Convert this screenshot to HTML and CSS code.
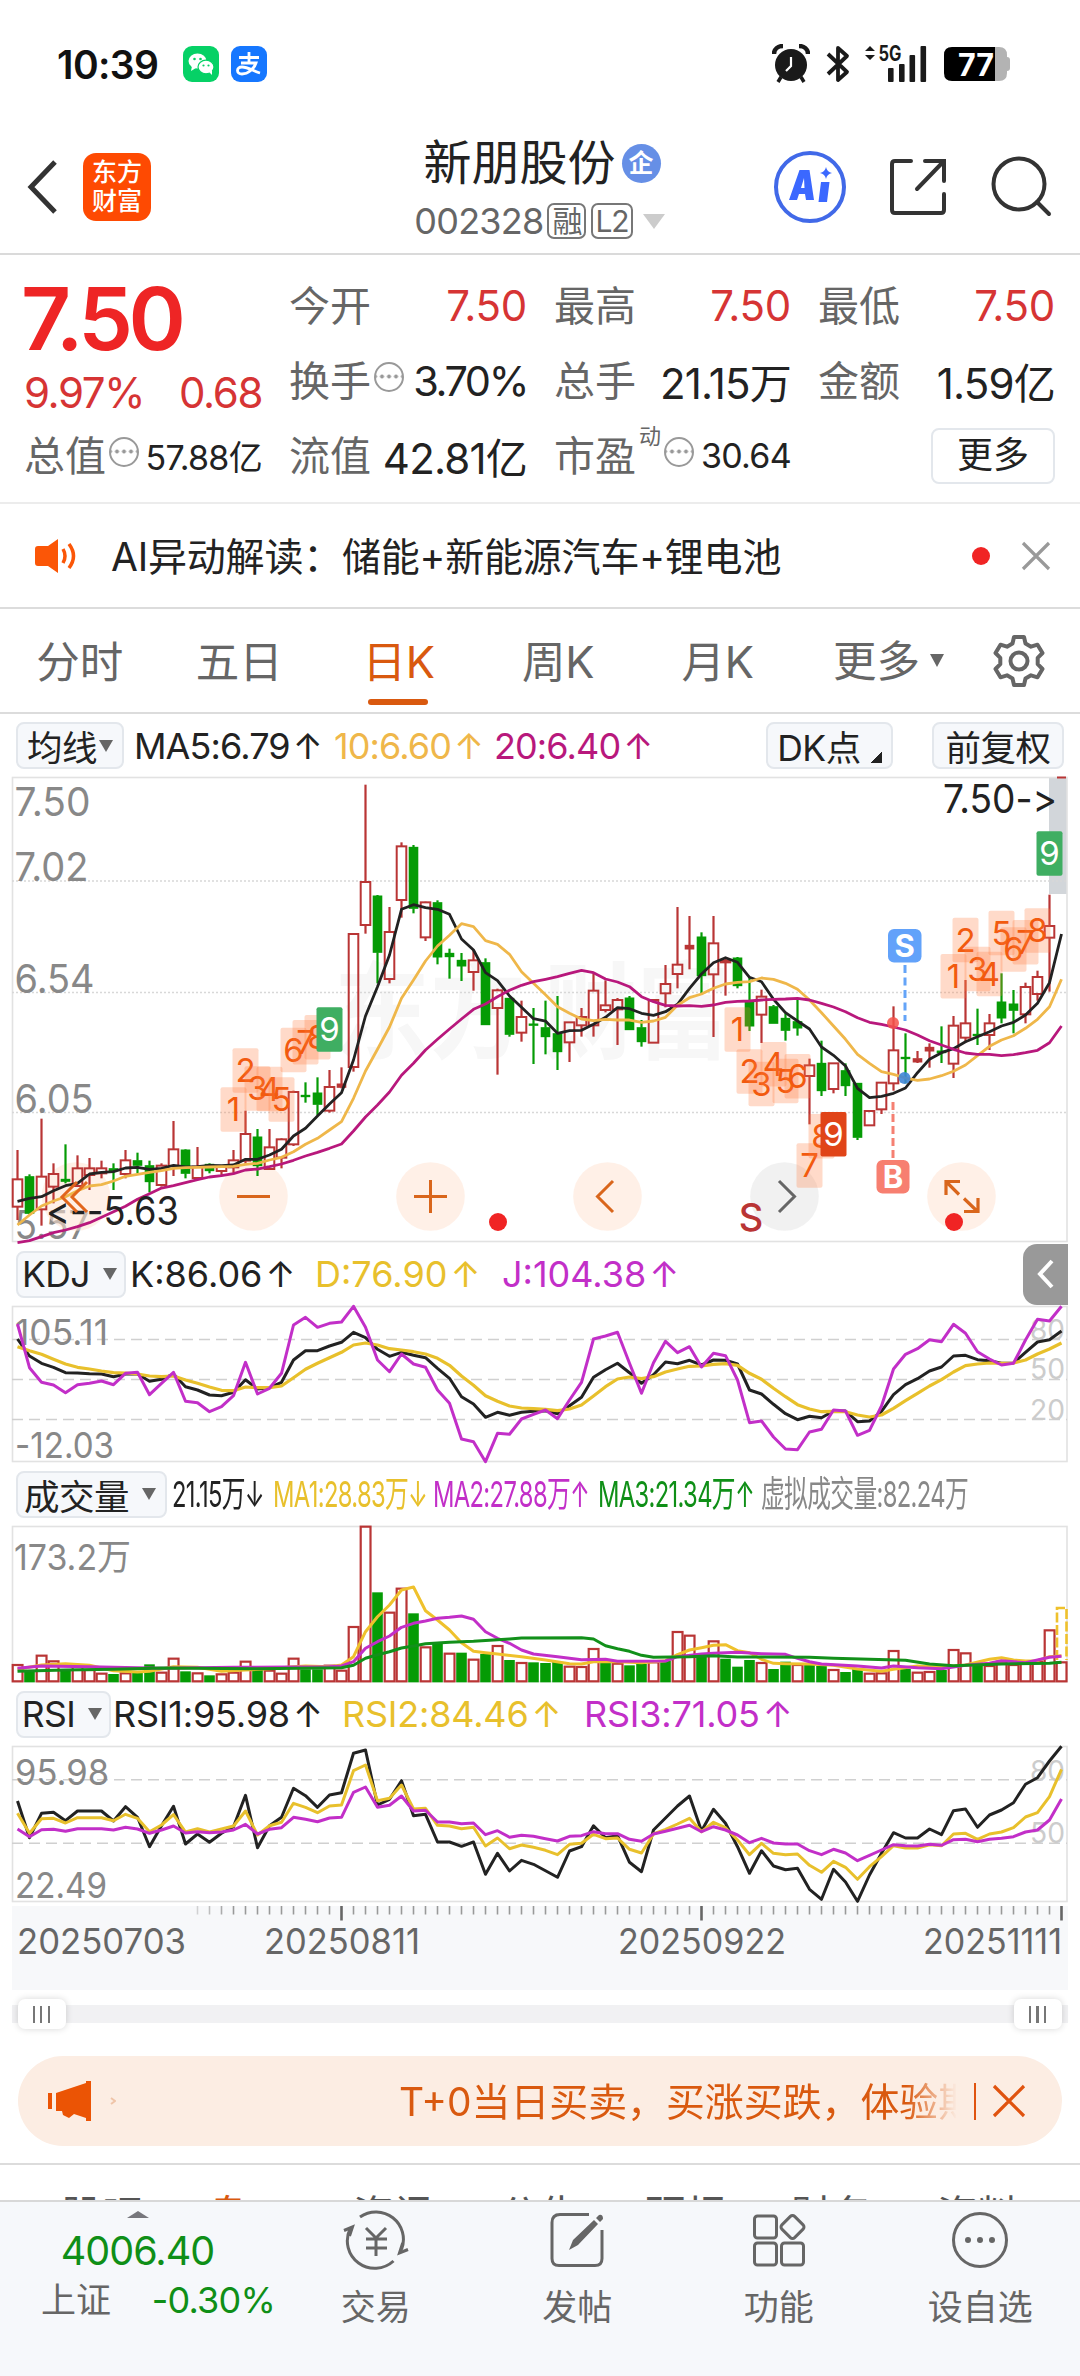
FILE: index.html
```html
<!DOCTYPE html>
<html lang="zh-CN">
<head>
<meta charset="utf-8">
<title>新朋股份 002328</title>
<link rel="stylesheet" href="styles.css">
</head>
<body>
<div class="status">
  <span class="clock">10:39</span>
  <svg class="app" width="36" height="36" viewBox="0 0 36 36"><rect width="36" height="36" rx="9" fill="#06d166"/><ellipse cx="14.500" cy="15" rx="9" ry="7.600" fill="#fff"/><path d="M9 20l-1 5 5-3z" fill="#fff"/><ellipse cx="23" cy="21" rx="8" ry="6.800" fill="#fff" stroke="#06d166" stroke-width="1.200"/><path d="M26 26l3 3 0-5z" fill="#fff"/><g fill="#06d166"><circle cx="11.500" cy="13" r="1.300"/><circle cx="17.500" cy="13" r="1.300"/><circle cx="20.500" cy="19.500" r="1.100"/><circle cx="25.500" cy="19.500" r="1.100"/></g></svg>
  <svg class="app" width="36" height="36" viewBox="0 0 36 36"><rect width="36" height="36" rx="9" fill="#1677ff"/><path d="M8 11.500h20M18 6v11M10 17h15c-2 6-8 11-14 11-6 0-6-7 0-7 6 0 11 4 18 6" fill="none" stroke="#fff" stroke-width="2.800"/></svg>
  <span class="grow"></span>
  <svg width="38" height="40" viewBox="0 0 38 40"><circle cx="19" cy="21" r="16" fill="#1a1a1a"/><path d="M2 10C2 5 6 2 11 2M36 10C36 5 32 2 27 2" stroke="#1a1a1a" stroke-width="4.500" fill="none"/><path d="M9 33l-3 5M29 33l3 5" stroke="#1a1a1a" stroke-width="3.500"/><path d="M19 13v9l-5 5" stroke="#fff" stroke-width="2.200" fill="none"/></svg>
  <svg class="bt" width="24" height="38" viewBox="0 0 24 38"><path d="M2 9l19 18-9 8V3l9 8L2 29" fill="none" stroke="#1a1a1a" stroke-width="3.800" stroke-linejoin="round"/></svg>
  <svg class="sig" width="63" height="38" viewBox="0 0 63 38"><path d="M0 6l5-5 5 5zM0 10l5 5 5-5z" fill="#1a1a1a"/><text x="13.500" y="16" font-size="21" font-weight="700" textLength="23" lengthAdjust="spacingAndGlyphs" fill="#1a1a1a">5G</text><g fill="#1a1a1a"><rect x="23" y="23" width="5.600" height="14" rx="1"/><rect x="34" y="19" width="5.600" height="18" rx="1"/><rect x="44.500" y="10" width="5.600" height="27" rx="1"/><rect x="55.500" y="1" width="5.600" height="36" rx="1"/></g></svg>
  <svg width="67" height="34" viewBox="0 0 67 34"><path d="M51 0h4q8 0 8 8v2q3 0 3 3v8q0 3-3 3v2q0 8-8 8h-4z" fill="#b3b3b3"/><path d="M8 0h43v34H8q-8 0-8-8V8q0-8 8-8z" fill="#000"/><text x="14" y="28.500" font-size="31" font-weight="700" textLength="36" lengthAdjust="spacingAndGlyphs" fill="#fff">77</text></svg>
</div>

<header class="head">
  <div class="head-left">
    <svg width="32" height="56" viewBox="0 0 32 56"><path d="M28 3L4 28l24 25" fill="none" stroke="#333" stroke-width="5"/></svg>
    <div class="logo"><span>东方</span><span>财富</span></div>
  </div>
  <div class="head-mid">
    <div class="name">新朋股份<span class="corp">企</span></div>
    <div class="code"><span class="num">002328</span><span class="tag">融</span><span class="tag">L2</span><i class="down"></i></div>
  </div>
  <div class="head-right">
    <svg width="74" height="74" viewBox="0 0 74 74"><circle cx="37" cy="37" r="34" fill="none" stroke="#4169e8" stroke-width="4"/><path d="M16 50L26.500 20h10L41 50h-8l-1-6h-6l-2 6zM28 38h3.500L31 28zM48 32h8.500L54 52h-8.500z" fill="#3b68ff"/><path d="M53 17q1 5 6 6-5 1-6 6-1-5-6-6 5-1 6-6z" fill="#3b68ff"/></svg>
    <svg class="share" width="60" height="60" viewBox="0 0 60 60"><path d="M23 4H7Q4 4 4 7v46q0 3 3 3h46q3 0 3-3V37M37 4h19v20M56 4L29 32" fill="none" stroke="#333" stroke-width="4" stroke-linecap="round"/></svg>
    <svg width="62" height="62" viewBox="0 0 62 62"><circle cx="29" cy="28" r="25.500" fill="none" stroke="#333" stroke-width="4"/><path d="M47 46l12 12" stroke="#333" stroke-width="4" stroke-linecap="round"/></svg>
  </div>
</header>

<section class="quote">
  <div class="qcol">
    <div class="price">7.50</div>
    <div class="chg"><span>9.97%</span><span>0.68</span></div>
    <div class="cell"><label>总值</label><i class="more-dot"></i><b class="small">57.88亿</b></div>
  </div>
  <div class="qcol">
    <div class="cell"><label>今开</label><b class="up">7.50</b></div>
    <div class="cell"><label>换手</label><i class="more-dot"></i><b class="pct">3.70%</b></div>
    <div class="cell"><label>流值</label><b>42.81亿</b></div>
  </div>
  <div class="qcol">
    <div class="cell"><label>最高</label><b class="up">7.50</b></div>
    <div class="cell"><label>总手</label><b>21.15万</b></div>
    <div class="cell"><label>市盈</label><sup>动</sup><i class="more-dot"></i><b class="small">30.64</b></div>
  </div>
  <div class="qcol">
    <div class="cell"><label>最低</label><b class="up">7.50</b></div>
    <div class="cell"><label>金额</label><b>1.59亿</b></div>
    <div class="cell end"><span class="more">更多</span></div>
  </div>
</section>

<section class="notice">
  <svg width="44" height="36" viewBox="0 0 44 36"><path d="M4 8h10L24 1v34l-10-7H4q-3 0-3-3V11q0-3 3-3z" fill="#fb5607"/><path d="M29 11q4 7 0 14M35 6q9 12 0 24" fill="none" stroke="#fb5607" stroke-width="3.500"/></svg>
  <p>AI异动解读：储能+新能源汽车+锂电池</p>
  <span class="dot"></span>
  <svg width="30" height="30" viewBox="0 0 30 30"><path d="M2 2l26 26M28 2L2 28" stroke="#999" stroke-width="3.200"/></svg>
</section>

<nav class="periods">
  <span>分时</span><span>五日</span><span class="on">日K</span><span>周K</span><span>月K</span><span class="drop">更多<i></i></span>
  <svg width="52" height="52" viewBox="0 0 52 52"><path d="M21 2h10l1.500 6.500 5.500 3.200 6.500-2L49.500 18l-4.800 4.800v6.400L49.500 34l-5 8.300-6.500-2-5.500 3.200L31 50H21l-1.500-6.500-5.500-3.200-6.500 2L2.500 34l4.800-4.800v-6.400L2.500 18l5-8.300 6.500 2 5.500-3.200z" fill="none" stroke="#666" stroke-width="4" stroke-linejoin="round"/><circle cx="26" cy="26" r="8.500" fill="none" stroke="#666" stroke-width="4"/></svg>
</nav>

<div class="legend ma">
  <span class="pick">均线<i></i></span><span>MA5:6.79<em></em>↑</span><span class="c-amber">10:6.60<em></em>↑</span><span class="c-berry">20:6.40<em></em>↑</span>
  <span class="pick">DK点<i class="corner"></i></span><span class="pick fq">前复权</span>
</div>
<svg class="panel" id="main" viewBox="12 777 1056 465" height="465"></svg>

<div class="legend kdj">
  <span class="pick">KDJ<i></i></span><span>K:86.06<em></em>↑</span><span class="c-gold">D:76.90<em></em>↑</span><span class="c-violet">J:104.38<em></em>↑</span>
  <span class="fold"><svg width="20" height="30" viewBox="0 0 20 30"><path d="M16 2L4 15l12 13" fill="none" stroke="#fff" stroke-width="4"/></svg></span>
</div>
<svg class="panel" id="kdj" viewBox="12 1306 1056 156" height="156"></svg>

<div class="legend vol">
  <span class="pick">成交量<i></i></span><span class="thin">21.15万↓</span><span class="thin c-gold">MA1:28.83万↓</span><span class="thin c-violet">MA2:27.88万↑</span><span class="thin c-green">MA3:21.34万↑</span><span class="thin c-grey">虚拟成交量:82.24万</span>
</div>
<svg class="panel" id="vol" viewBox="12 1526 1056 156" height="156"></svg>

<div class="legend rsi">
  <span class="pick">RSI<i></i></span><span>RSI1:95.98<em></em>↑</span><span class="c-gold">RSI2:84.46<em></em>↑</span><span class="c-violet">RSI3:71.05<em></em>↑</span>
</div>
<svg class="panel" id="rsi" viewBox="12 1746 1056 156" height="156"></svg>
<svg class="panel axis" id="axis" viewBox="12 1906 1056 84" height="84"></svg>

<div class="slider"><span class="grip"></span><span class="rail"></span><span class="grip"></span></div>

<div class="promo">
  <svg width="46" height="40" viewBox="0 0 46 40"><path d="M0 12h4v16H0zM8 12L38 2V0h5v40h-5v-3l-12-4-5 4-6-3-1-4H8z" fill="#eb5405"/></svg>
  <svg class="wee" width="6" height="8" viewBox="0 0 6 8"><path d="M1 1l4 3-4 3" fill="none" stroke="#efc4a8" stroke-width="2"/></svg>
  <p>T+0当日买卖，买涨买跌，体验期</p>
  <span class="bar"></span>
  <svg width="34" height="36" viewBox="0 0 34 36"><path d="M2 3l30 30M32 3L2 33" stroke="#e0530f" stroke-width="3.200"/></svg>
</div>

<nav class="sections"><span>股吧</span><span class="on">盘口</span><span>资讯</span><span>公告</span><span>研报</span><span>财务</span><span>资料</span></nav>

<footer class="dock">
  <div class="index"><i class="tri"></i><strong>4006.40</strong><div><span>上证</span><b>-0.30%</b></div></div>
  <div class="act"><svg width="66" height="60" viewBox="0 0 66 60"><g fill="none" stroke="#666" stroke-width="3"><path d="M17 7a27.500 27.500 0 0 1 41.500 32.500M50.500 51a27.500 27.500 0 0 1-43.500-32"/><path d="M1 20.500l8.500-3.500L6.500 26M65 39.500l-8.500 3.500 3.200-10"/><path d="M23 18l10 10 10-10M33 28v18M23 29h21M23 38h21"/></g></svg><span>交易</span></div>
  <div class="act"><svg width="60" height="60" viewBox="0 0 60 60"><path d="M42 4.500H13Q5 4.500 5 12.500v36q0 7 7 7h36q7 0 7-7V20" fill="none" stroke="#666" stroke-width="3"/><path d="M22 40l4-10L47 10l4 4-20 21zM49 8l3-3q4-1 4 4l-3 3z" fill="#666"/></svg><span>发帖</span></div>
  <div class="act"><svg width="60" height="60" viewBox="0 0 60 60"><g fill="none" stroke="#666" stroke-width="3"><rect x="5.500" y="6" width="22" height="22" rx="3"/><rect x="5.500" y="33" width="22" height="22" rx="3"/><rect x="32.500" y="33" width="22" height="22" rx="3"/><rect x="34.500" y="8" width="18" height="18" rx="3" transform="rotate(45 43.500 17)"/></g></svg><span>功能</span></div>
  <div class="act"><svg width="60" height="60" viewBox="0 0 60 60"><circle cx="30" cy="30" r="26.500" fill="none" stroke="#666" stroke-width="3"/><g fill="#666"><circle cx="18" cy="30" r="3"/><circle cx="30" cy="30" r="3"/><circle cx="42" cy="30" r="3"/></g></svg><span>设自选</span></div>
</footer>
<script src="charts.js"></script>
</body>
</html>
```
FILE: styles.css
```css
* { box-sizing: border-box; }
body {
  margin: 0;
  width: 1080px;
  height: 2376px;
  overflow: hidden;
  background: #fff;
  color: #222;
  font-family: Inter, "Noto Sans CJK SC", sans-serif;
  display: flex;
  flex-direction: column;
}
body > * { flex: none; }
svg { display: block; flex: none; }
i, em { font-style: normal; }
p { margin: 0; }
.grow { flex: 1; }

.status { height: 120px; display: flex; align-items: center; padding: 8px 69px 0 57px; color: #111; }
.clock { width: 126px; font-size: 39px; font-weight: 600; letter-spacing: -.6px; }
.app { margin-right: 12px; }
.bt { margin-left: 16px; }
.sig { margin: 0 16px 0 15px; }

.head { height: 135px; border-bottom: 2px solid #dadada; display: grid; grid-template-columns: 1fr auto 1fr; padding: 0 28px 0 27px; }
.head-left { display: flex; align-items: center; }
.logo { margin-left: 24px; width: 68px; height: 68px; border-radius: 13px; background: #fe4a02; color: #fff; font-size: 25px; font-weight: 500; line-height: 29px; display: flex; flex-direction: column; align-items: center; justify-content: center; }
.head-mid { display: flex; flex-direction: column; align-items: center; padding-top: 13px; }
.name { display: flex; align-items: center; font-size: 48px; line-height: 60px; height: 60px; padding-left: 5px; }
.corp { width: 39px; height: 39px; margin-left: 6px; border-radius: 50%; background: #668fe6; color: #fff; font-size: 25px; font-weight: 700; line-height: 38px; text-align: center; }
.code { display: flex; align-items: center; height: 56px; color: #666; font-size: 36px; }
.num { letter-spacing: -.8px; margin-right: 4px; }
.tag { height: 36px; min-width: 39px; border: 2px solid #777; border-radius: 7px; margin-right: 5px; font-size: 30px; line-height: 32px; text-align: center; padding: 0 2px; letter-spacing: -1px; }
.down { border: 11px solid transparent; border-top: 15px solid #ccc; border-bottom: 0; margin-left: 5px; }
.head-right { display: flex; align-items: center; justify-content: flex-end; }
.share { margin: 0 42px 0 41px; }

.quote { height: 249px; border-bottom: 2px solid #ececec; display: grid; grid-template-columns: 238px 238px 237px 237px; column-gap: 27px; padding: 13px 0 0 24px; }
.qcol { display: flex; flex-direction: column; }
.cell { height: 75px; display: flex; align-items: center; }
.cell label { color: #666; font-size: 41px; line-height: 60px; }
.cell b { margin-left: auto; font-weight: 400; font-size: 42px; letter-spacing: -.8px; white-space: nowrap; }
.cell b.small { font-size: 34px; letter-spacing: -.7px; }
.cell b.pct { letter-spacing: -2.4px; font-size: 41.5px; }
.cell b.up { color: #d63434; letter-spacing: -.3px; }
.chg { color: #d63434; }
.cell sup { align-self: flex-start; font-size: 22px; line-height: 30px; color: #666; margin: 3px 0 0 3px; }
.end { justify-content: flex-end; }
.price { height: 99px; color: #ee2525; font-size: 87px; font-weight: 600; line-height: 102px; letter-spacing: -4.5px; margin-left: -3px; }
.chg { height: 51px; display: flex; justify-content: space-between; align-items: center; font-size: 42px; letter-spacing: -1.400px; }
.more-dot { width: 30px; height: 30px; margin: -8px 0 0 3px; border: 2.500px solid #999; border-radius: 50%; background: radial-gradient(circle, #999 1.800px, transparent 2.300px) 50% 50% / 7px 25px repeat-x; }
.more { width: 124px; height: 56px; border: 2px solid #e3e7ec; border-radius: 8px; font-size: 36px; line-height: 50px; text-align: center; }

.notice { height: 105px; display: flex; align-items: center; padding: 0 29px 0 34px; border-bottom: 2px solid #dcdcdc; }
.notice p { flex: 1; margin: -4px 0 0 33px; font-size: 39px; letter-spacing: -.200px; color: #222; }
.dot { width: 18px; height: 18px; border-radius: 50%; background: #f02424; margin-right: 31px; }

.periods { height: 105px; display: grid; grid-template-columns: repeat(5, 159.500px) 182px 84px; align-items: center; border-bottom: 2px solid #dcdcdc; color: #666; font-size: 43.5px; }
.periods span { height: 103px; line-height: 106px; text-align: center; position: relative; }
.periods .on { color: #d9590f; }
.periods .on::after { content: ""; position: absolute; left: 49px; bottom: 7px; width: 60px; height: 6px; border-radius: 3px; background: #d9590f; }
.periods .drop { display: flex; align-items: center; justify-content: center; }
.drop i { border: 7.500px solid transparent; border-top: 13px solid #666; border-bottom: 0; margin-left: 10px; }
.periods svg { margin-left: 13px; }

.legend { height: 64px; display: grid; align-items: center; font-size: 36px; letter-spacing: 0; white-space: nowrap; }
.legend span:not(.pick):not(.fold) { line-height: 60px; }
.legend em { display: inline-block; width: 3px; }
.pick { height: 47px; border: 2px solid #e3e7ec; border-radius: 8px; background: #f6f8fb; display: flex; align-items: center; justify-content: center; color: #222; font-size: 35.5px; letter-spacing: -.500px; }
.pick i { border: 7px solid transparent; border-top: 12px solid #666; border-bottom: 0; margin-left: 2px; }
.pick i.corner { border: 0; width: 11px; height: 11px; margin: 24px 0 0 10px; background: linear-gradient(135deg, transparent 50%, #222 50%); }
.ma { height: 63px; grid-template-columns: 108px 186px 148px 260px 127px 159px; padding-left: 16px; column-gap: 12px; letter-spacing: -.9px; }
.ma .fq { margin-left: 27px; width: 132px; }
.ma > span:nth-child(2) { margin-left: -2px; }
.kdj { grid-template-columns: 110px 181px 183px 1fr 45px; padding: 0 12px 0 16px; column-gap: 4px; }
.vol { grid-template-columns: 151px 96px 155px 160px 158px 1fr; padding-left: 16px; column-gap: 5px; letter-spacing: -1px; }
.rsi { grid-template-columns: 95px 227px 240px 1fr; padding-left: 16px; column-gap: 2px; letter-spacing: -.2px; }
.kdj .pick, .rsi .pick, .vol .pick { padding-right: 3px; }
.kdj .pick i, .rsi .pick i, .vol .pick i { margin-left: 13px; }
.thin { transform: scaleX(.66); transform-origin: 0 50%; width: 0; }
.c-amber { color: #efb74a; }
.c-berry { color: #b8187c; }
.c-gold { color: #e8c02c; }
.c-violet { color: #c22fc8; }
.c-green { color: #0f8f17; }
.c-grey { color: #888; }
.fold { height: 61px; border-radius: 14px 0 0 14px; background: #999; display: flex; align-items: center; justify-content: center; }

.panel { width: 1056px; margin: 0 12px; overflow: visible; }
.axis { margin-top: 4px; background: #f7f8fa; }

.slider { height: 66px; margin: 0 12px; display: flex; align-items: center; padding: 0 6px 18px; background: linear-gradient(#f1f1f3, #f1f1f3) 0 15px / 100% 18px no-repeat; }
.rail { flex: 1; }
.grip { width: 48px; height: 30px; border-radius: 7px; background: repeating-linear-gradient(90deg, #777 0 2px, transparent 2px 7.500px) 15px 7px / 18px 17px no-repeat #fff; box-shadow: 0 0 7px rgba(0, 0, 0, .16); }

.promo { height: 90px; margin: 0 18px 17px; padding: 0 36px 0 30px; border-radius: 45px; background: #fcede3; display: flex; align-items: center; }
.wee { margin-left: 16px; }
.promo p { margin: -5px 0 0 283px; width: 557px; overflow: hidden; white-space: nowrap; font-size: 38.900px; color: #d9590f; -webkit-mask-image: linear-gradient(90deg, #000 507px, transparent 558px); mask-image: linear-gradient(90deg, #000 507px, transparent 558px); }
.bar { width: 2px; height: 37px; background: #e0530f; margin: 0 16px 0 18px; }

.sections { height: 37px; border-top: 2px solid #dcdcdc; overflow: hidden; display: grid; grid-template-columns: repeat(7, 146px); padding: 27px 0 0 29px; font-size: 41px; line-height: 46px; color: #555; text-align: center; }
.sections .on { color: #d9590f; }

.dock { height: 176px; border-top: 2px solid #d8d8d8; background: #f6f8fb; display: grid; grid-template-columns: 275px repeat(4, 201.500px); color: #666; }
.index { display: flex; flex-direction: column; align-items: center; }
.tri { border: 11px solid transparent; border-bottom: 7px solid #77777c; border-top: 0; margin-top: 9px; }
.index strong { font-size: 39.5px; font-weight: 400; line-height: 50px; letter-spacing: -1px; color: #0f8f17; margin-top: 8px; }
.index div { width: 234px; margin-left: 41px; display: flex; justify-content: space-between; align-items: center; font-size: 35px; line-height: 60px; align-self: flex-start; margin-top: -6px; }
.index b { font-weight: 400; color: #0f8f17; font-size: 36px; letter-spacing: -.8px; }
.act { display: flex; flex-direction: column; align-items: center; padding-top: 8px; font-size: 35px; }
.act span { line-height: 60px; margin-top: 7px; }
svg text { font-family: Inter, "Noto Sans CJK SC", sans-serif; font-variant-ligatures: none; font-feature-settings: "calt" 0; }
```
FILE: charts.js
```js
const NS = "http://www.w3.org/2000/svg";
const RED = "#b93535", GREEN = "#059b05", INK = "#222";
const X = i => 17.5 + 12 * i;

function add(svg, tag, attrs, text) {
  const el = document.createElementNS(NS, tag);
  for (const k in attrs) el.setAttribute(k, attrs[k]);
  if (text) el.textContent = text;
  svg.appendChild(el);
  return el;
}
function label(svg, s, x, y, w, size, fill, extra) {
  add(svg, "text", Object.assign({ x, y, "font-size": size, fill, textLength: w, lengthAdjust: "spacingAndGlyphs" }, extra), s);
}
/* Series values are stored in thirds of a pixel below the series base. */
function line(svg, base, ys, color, w) {
  const pts = Array.isArray(ys)
    ? ys.map((y, i) => [i, y])
    : Object.entries(ys).map(([i, y]) => [+i, y]);
  add(svg, "polyline", {
    points: pts.map(([i, y]) => X(i).toFixed(1) + "," + (base + y / 3).toFixed(1)).join(" "),
    fill: "none", stroke: color, "stroke-width": w || 3, "stroke-linejoin": "round"
  });
}
function frame(svg, y, h) {
  add(svg, "rect", { x: 12.5, y: y + .5, width: 1054.5, height: h - 1, fill: "none", stroke: "#e2e2e2", "stroke-width": 1.6 });
}
function rule(svg, y, dash, color) {
  add(svg, "line", { x1: 12, x2: 1067, y1: y, y2: y, stroke: color, "stroke-width": 1.4, "stroke-dasharray": dash });
}

/* Candles: kind, body top, body bottom, wick top, wick bottom. */
const candles = `r1228,1310,1140,1350 g1220,1330,1213,1333 r1220,1318,1046,1367 r1212,1250,1180,1300 g1228,1234,1123,1240 r1195,1248,1156,1250
r1195,1215,1164,1260 r1195,1210,1172,1225 g1196,1202,1180,1260 r1171,1212,1140,1225 g1172,1186,1148,1210 g1187,1235,1172,1267
r1187,1245,1180,1250 r1138,1188,1053,1218 g1140,1210,1138,1225 r1190,1224,1131,1226 g1183,1202,1180,1210 r1190,1203,1185,1217
r1171,1192,1140,1210 r1092,1172,1022,1185 g1101,1187,1077,1218 r1132,1197,1077,1200 r1108,1163,1105,1195 r966,1123,962,1128
g976,980,937,998 g969,1003,922,1035 r951,1022,900,1028 f942,952,892,955 r492,891,492,905 r336,465,44,491
g378,547,375,640 r486,627,411,640 r229,390,217,443 g232,415,225,430 r397,502,395,513 g398,561,391,583
g550,560,536,626 g571,588,549,633 r571,606,540,662 g578,764,565,764 r661,714,656,914 g685,793,685,800
r741,788,692,815 g762,766,714,882 g773,800,692,853 g791,845,678,900 r757,817,757,876 r741,766,714,800
r662,766,610,800 r706,720,631,727 r690,718,684,825 g684,779,678,779 g773,815,750,830 r690,818,690,818
r642,670,585,712 r584,612,411,655 f526,537,438,598 g501,617,487,670 r520,613,438,801 r572,577,565,677
g564,647,561,655 g693,768,624,783 r680,734,659,819 g710,760,705,760 g745,781,730,812 g755,774,685,797
r886,918,866,1063 g880,962,812,978 r880,957,880,970 g902,947,880,978 g940,1102,940,1110 r1023,1066,1023,1066
r938,1018,938,1032 r841,940,709,962 g862,866,790,940 f866,876,843,879 f832,843,820,893 g843,848,769,879
r767,881,738,924 r760,803,630,818 g793,797,716,825 r760,795,732,840 g696,744,610,760 g702,721,660,790
r651,733,638,760 r621,672,602,692 r468,503,374,665`.split(/\s+/).map(s => [s[0], ...s.slice(1).split(",").map(Number)]);

const ma5 = [1294,1285,1280,1262,1247,1240,1212,1207,1205,1194,1192,1198,1195,1186,1191,1190,1186,1187,1185,1168,1168,1155,1138,1098,1075,1038,1002,968,870,738,650,555,418,404,413,418,433,507,540,608,632,678,712,746,753,790,782,781,763,742,713,716,730,736,725,703,655,612,578,563,577,622,635,688,728,753,777,831,856,888,955,983,979,970,954,908,868,848,836,815,800,785,768,757,735,700,638,492];
const ma10 = [1365,1335,1308,1293,1280,1262,1248,1244,1233,1219,1213,1207,1202,1195,1193,1192,1191,1190,1189,1183,1180,1170,1162,1145,1123,1105,1080,1055,985,903,838,771,685,630,573,528,496,461,470,512,523,553,605,640,674,710,730,747,752,748,750,750,757,753,742,706,683,672,655,642,637,635,624,628,640,658,690,728,768,808,853,880,905,913,924,931,927,917,904,885,857,829,810,797,775,748,710,628];
const ma20 = [1418,1412,1400,1388,1380,1370,1358,1342,1325,1309,1288,1271,1254,1247,1238,1229,1221,1217,1211,1200,1197,1190,1182,1171,1158,1147,1135,1122,1083,1041,1005,966,916,880,840,808,777,747,718,702,680,661,646,635,628,620,610,601,608,627,636,650,680,695,706,708,707,709,705,697,694,693,690,688,687,685,690,700,711,725,743,757,763,771,780,795,812,825,838,849,853,853,857,854,848,841,818,768];

/* Run counters: candle index, digit, box top. */
const counters = [[18,1,952],[19,2,835],[20,3,889],[21,4,890],[22,5,922],[23,6,773],[24,7,750],[25,8,735],[26,9,712,"#3fae62"],
  [60,1,712],[61,2,838],[62,3,875],[63,4,816],[64,5,866],[65,6,852],[66,7,1120],[67,8,1032],[68,9,1026,"#e04418"],
  [78,1,552],[79,2,443],[80,3,530],[81,4,545],[82,5,422],[83,6,472],[84,7,450],[85,8,415],[86,9,184,"#3fae62"]];

(function main() {
  const s = document.getElementById("main"), B = 770;
  label(s, "东方", 334, 1050, 192, 105, "#f7f7f7", { "font-weight": 700 });
  label(s, "财富", 544, 1050, 186, 105, "#f7f7f7", { "font-weight": 700 });
  add(s, "rect", { x: 1049, y: 777, width: 18, height: 117, fill: "#d2d6da" });
  frame(s, 777, 465);
  [881, 992.5, 1112.5].forEach(y => rule(s, y, "2 2", "#d8d8d8"));
  [["7.50", 815.5, 76], ["7.02", 881, 74], ["6.54", 993, 80], ["6.05", 1113, 79], ["5.57", 1239, 75]].forEach(([t, y, w]) => label(s, t, 14.5, y, w, 40, "#888"));
  [[76, 1], [253.5, 1], [430.5, 1], [607.5, 1], [784.5, 0], [961.5, 1]].forEach(([x, on]) =>
    add(s, "circle", { cx: x, cy: 1196.5, r: 34.3, fill: on ? "#ffe3d3" : "#e6e6e6", "fill-opacity": .55 }));
  candles.forEach(([k, t, b, wt, wb], i) => {
    const x = X(i), c = k === "g" ? GREEN : RED;
    const y = v => B + v / 3;
    if (wt < t) add(s, "line", { x1: x, x2: x, y1: y(wt), y2: y(t), stroke: c, "stroke-width": 2.2 });
    if (wb > b) add(s, "line", { x1: x, x2: x, y1: y(b), y2: y(wb), stroke: c, "stroke-width": 2.2 });
    if (k === "r") add(s, "rect", { x: x - 4.8, y: y(t), width: 9.6, height: Math.max(1, (b - t) / 3), fill: "none", stroke: c, "stroke-width": 2 });
    else add(s, "rect", { x: x - 4.8, y: y(t) - .5, width: 9.6, height: Math.max(1.5, (b - t) / 3 + 1), fill: c });
  });
  add(s, "line", { x1: 1057, x2: 1066, y1: 777.5, y2: 777.5, stroke: RED, "stroke-width": 2 });
  line(s, B, ma5, INK, 2.8); line(s, B, ma10, "#efb74a", 2.8); line(s, B, ma20, "#b8187c", 2.8);
  counters.forEach(([i, n, t, solid]) => {
    const x = X(i), y = B + t / 3;
    add(s, "rect", { x: x - 13, y, width: 26, height: 44.5, rx: 2, fill: solid || "#ff7a3c", "fill-opacity": solid ? 1 : .28 });
    add(s, "text", { x, y: y + 34, "font-size": 33, "text-anchor": "middle", fill: solid ? "#fff" : "#f25a0f" }, n);
  });
  add(s, "circle", { cx: 893, cy: 1023, r: 6, fill: "#f5524a", "fill-opacity": .85 });
  add(s, "circle", { cx: 904.5, cy: 1078, r: 6, fill: "#3f86d8", "fill-opacity": .9 });
  add(s, "line", { x1: 905, x2: 905, y1: 965, y2: 1021, stroke: "#64a4f8", "stroke-width": 3, "stroke-dasharray": "8 4.5" });
  add(s, "line", { x1: 893, x2: 893, y1: 1102, y2: 1158, stroke: "#f58072", "stroke-width": 3, "stroke-dasharray": "8 4" });
  add(s, "rect", { x: 888, y: 929, width: 33.5, height: 33.5, rx: 6, fill: "#62a2fa" });
  add(s, "rect", { x: 876.5, y: 1160, width: 33, height: 33.5, rx: 6, fill: "#f77f70" });
  add(s, "text", { x: 904.7, y: 956.5, "font-size": 31, "font-weight": 700, "text-anchor": "middle", fill: "#fff" }, "S");
  add(s, "text", { x: 893, y: 1187.5, "font-size": 31, "font-weight": 700, "text-anchor": "middle", fill: "#fff" }, "B");
  label(s, "7.50->", 943, 813, 114, 40, INK);
  label(s, "<--5.63", 46, 1225, 133, 40, INK);
  const pen = (d, c, w) => add(s, "path", { d, fill: "none", stroke: c, "stroke-width": w || 3 });
  pen("M77 1182L62 1197l15 15M87 1182l-15 15 15 15", "#e2661c");
  pen("M237 1196.5h33M414 1196.5h33M430.5 1180v33", "#d9661c");
  pen("M613 1181l-15.5 15.5 15.5 15.5", "#d9661c");
  pen("M779 1181l15.5 15.5-15.5 15.5", "#666");
  pen("M946 1195v-13.5h14M947 1182.5l12 12M978 1198v13.5h-14M977 1211l-13-12.5", "#d9661c", 3.2);
  add(s, "circle", { cx: 498, cy: 1222, r: 9, fill: "#f02424" });
  add(s, "circle", { cx: 954, cy: 1222, r: 9, fill: "#f02424" });
  add(s, "text", { x: 751, y: 1231, "font-size": 38, "font-weight": 500, "text-anchor": "middle", fill: RED }, "S");
})();

(function kdj() {
  const s = document.getElementById("kdj"), B = 1240;
  frame(s, 1306, 156);
  [1339.5, 1379.5, 1419.5].forEach(y => rule(s, y, "11 6", "#d0d0d0"));
  label(s, "105.11", 15, 1345, 93, 36, "#888");
  label(s, "-12.03", 15, 1458, 99, 36, "#888");
  [["80", 1340], ["50", 1378.5], ["20", 1419.5]].forEach(([t, y]) => label(s, t, 1030, y, 35, 29, "#ccc"));
  line(s, B, [297,348,370,382,398,399,401,402,410,402,402,424,418,402,440,450,465,467,457,419,447,443,427,360,332,332,318,307,277,293,328,349,337,346,353,385,415,470,492,532,517,526,517,514,512,521,497,472,412,389,370,398,430,404,366,371,361,375,360,361,372,450,462,493,521,539,529,533,513,513,545,543,514,464,434,416,393,381,348,346,359,362,370,369,337,306,299,273], INK);
  line(s, B, [320,332,343,358,372,382,387,393,398,399,402,408,410,408,420,430,441,451,452,441,443,443,438,413,388,370,353,337,315,309,315,326,330,335,342,355,376,408,436,467,484,498,504,506,508,512,507,495,468,440,417,411,416,410,396,387,379,378,373,371,376,400,418,445,470,494,507,515,514,515,525,531,525,505,482,460,438,419,396,377,372,369,370,369,360,342,327,309], "#e8c02c", 3.2);
  line(s, B, [252,383,427,435,458,434,430,423,434,400,397,464,430,397,484,488,515,500,467,367,462,445,400,255,232,262,250,246,199,262,360,395,342,372,382,450,490,597,605,665,580,583,537,523,510,536,480,427,297,288,277,370,460,368,304,338,320,381,340,347,420,548,543,591,627,629,576,568,510,513,586,571,498,387,343,326,299,305,253,280,335,357,375,370,300,238,243,199], "#c22fc8");
})();

(function volume() {
  const s = document.getElementById("vol"), B = 1510, base = B + 514 / 3;
  frame(s, 1526, 156);
  label(s, "173.2万", 14, 1570, 117, 36, "#888");
  const bars = "r465 g480 r437 r454 g478 r471 r480 r491 g492 r490 g488 g463 r488 r446 g484 r490 g496 r493 r488 r455 g480 r482 r491 r446 g478 g478 r467 r482 r351 r50 g247 r308 r236 g310 r412 g400 r431 g428 r449 g432 r408 g450 r459 g457 g459 g456 r470 r471 r417 g456 r461 g466 g462 r457 g452 r366 r377 g440 r394 g446 g470 g450 r459 g477 g455 r465 g465 g468 r480 g486 g477 r491 r490 r423 g477 r488 r486 g480 r420 r430 g458 r468 r455 r465 r460 r455 r361 r457".split(" ");
  bars.forEach((b, i) => {
    const x = X(i), t = B + b.slice(1) / 3;
    if (b[0] === "g") add(s, "rect", { x: x - 5.3, y: t, width: 10.6, height: base - t + 1, fill: GREEN });
    else add(s, "rect", { x: x - 4.8, y: t, width: 9.8, height: base - t, fill: "#fff", stroke: RED, "stroke-width": 2.2 });
  });
  add(s, "path", { d: "M1057 1660V1608h9.5V1660", fill: "none", stroke: "#efc12c", "stroke-width": 2.6, "stroke-dasharray": "10 2.5" });
  line(s, B, {0:478,2:465,4:461,6:466,8:482,10:486,11:484,13:470,15:472,17:484,19:480,21:476,23:470,24:468,26:470,27:465,28:440,29:365,30:320,31:285,32:240,33:231,34:302,35:330,36:360,37:398,38:424,39:428,40:432,42:440,44:450,46:461,47:462,48:455,50:455,52:458,54:452,55:434,56:420,57:413,58:406,59:404,60:422,61:428,62:448,63:460,64:461,66:462,68:466,70:477,72:484,73:478,75:468,77:472,79:465,81:448,82:443,83:450,84:453,85:452,86:440,87:437}, "#efc12c");
  line(s, B, {0:475,2:468,6:470,12:475,18:472,26:470,27:468,28:455,29:415,30:395,31:378,32:352,33:340,34:333,35:325,36:322,37:318,38:328,39:365,40:385,41:400,42:420,43:432,45:440,47:449,49:448,50:454,54:453,55:440,57:432,58:430,60:427,62:431,64:433,65:445,66:455,67:462,70:468,72:474,73:468,75:473,77:476,79:466,81:460,82:452,84:458,85:450,86:442,87:439}, "#c22fc8");
  line(s, B, {0:484,4:480,8:478,12:474,20:476,27:473,28:466,29:445,30:434,31:425,32:414,33:408,34:401,36:397,38:394,41:387,42:384,47:383,48:387,49:407,50:416,51:424,52:436,53:442,56:440,58:437,60:441,66:442,68:445,74:451,76:462,78:467,82:462,86:460,87:457}, "#12901a");
})();

(function rsi() {
  const s = document.getElementById("rsi"), B = 1680;
  frame(s, 1746, 156);
  [1779.7, 1843.3].forEach(y => rule(s, y, "11 6", "#d0d0d0"));
  label(s, "95.98", 15, 1785, 94, 36, "#888");
  label(s, "22.49", 15, 1898, 92, 36, "#888");
  label(s, "80", 1030, 1781, 35, 29, "#ccc");
  label(s, "50", 1030, 1843, 35, 29, "#ccc");
  line(s, B, [363,473,400,397,422,393,393,393,423,380,412,500,437,379,492,462,487,460,440,346,503,437,412,325,347,382,345,338,220,210,375,358,302,407,403,486,486,499,486,583,520,573,541,553,572,592,513,500,437,473,467,547,575,450,414,378,348,453,388,430,500,580,512,558,569,565,628,658,568,606,664,585,520,458,474,474,447,464,392,387,442,405,390,368,313,293,243,199], INK);
  line(s, B, [400,460,416,415,429,413,413,413,422,403,415,455,435,404,456,446,456,447,438,393,465,437,427,370,382,398,378,375,272,255,362,355,315,387,385,436,438,446,442,498,474,506,495,502,511,524,493,490,463,476,474,508,519,462,448,432,415,455,427,443,480,524,490,520,524,522,556,577,544,562,598,560,530,497,504,504,494,497,462,460,478,462,456,443,411,398,350,268], "#e8c02c");
  line(s, B, [447,470,449,448,454,446,446,446,450,442,447,460,450,438,459,455,458,456,450,433,462,448,443,412,418,425,414,412,337,321,382,376,348,393,391,426,426,431,429,464,452,472,466,469,476,483,469,467,455,461,461,478,484,462,454,445,436,455,440,450,465,488,475,489,492,492,512,524,508,519,542,526,510,494,497,498,493,496,479,478,485,478,475,470,456,450,420,357], "#c22fc8");
})();

(function axis() {
  const s = document.getElementById("axis");
  for (let i = 15; i <= 87; i++) {
    const big = i % 30 === 27;
    add(s, "line", { x1: X(i), x2: X(i), y1: 1906, y2: big ? 1920.5 : 1914.5, stroke: big ? "#666" : "#999", "stroke-width": big ? 2.6 : 1.6, opacity: Math.min(1, (i - 13) / 5) });
  }
  [["20250703", 17, 169], ["20250811", 264, 156], ["20250922", 618, 168], ["20251111", 923, 139]].forEach(([t, x, w]) => label(s, t, x, 1954, w, 36, "#666"));
})();
```
